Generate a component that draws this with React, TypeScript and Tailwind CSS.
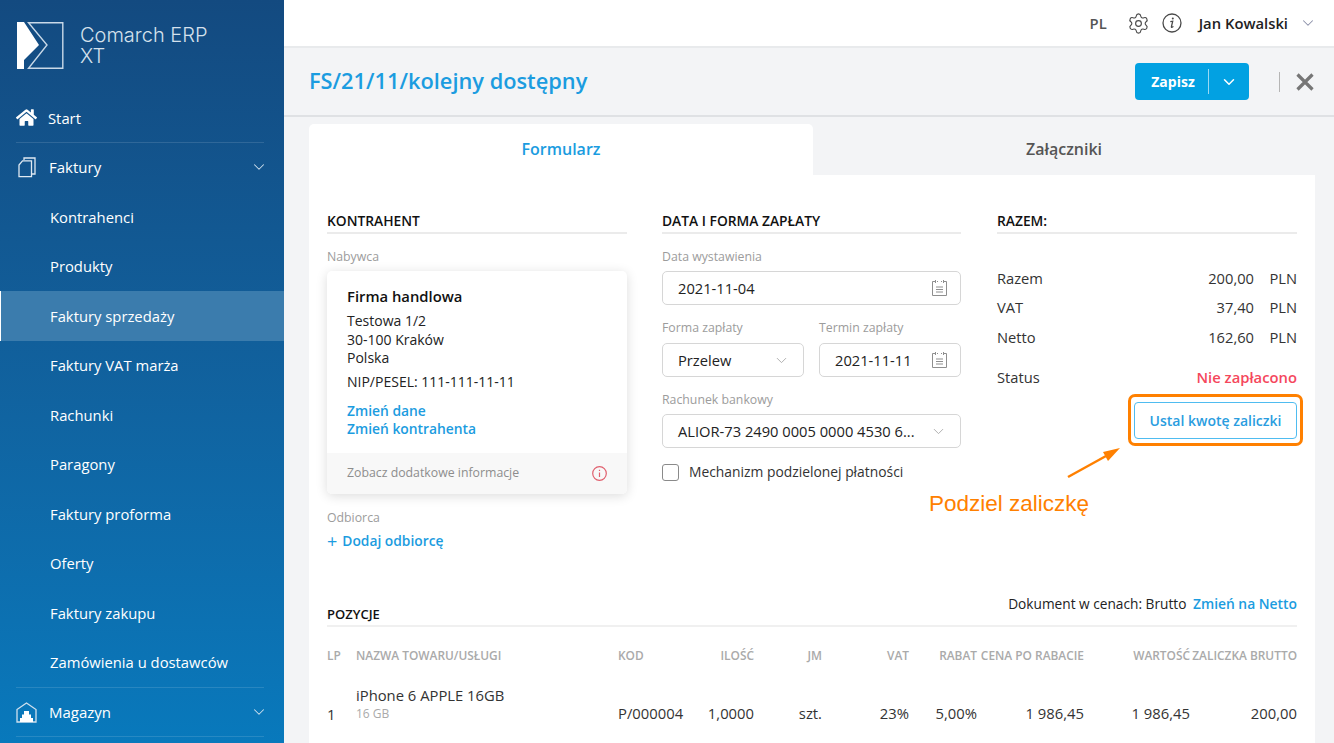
import React from "react";
import { ChevronDown, Settings } from "lucide-react";
import { FaHome } from "react-icons/fa";

const subItems = [
  "Kontrahenci",
  "Produkty",
  "Faktury sprzedaży",
  "Faktury VAT marża",
  "Rachunki",
  "Paragony",
  "Faktury proforma",
  "Oferty",
  "Faktury zakupu",
  "Zamówienia u dostawców",
];

function Logo() {
  return (
    <svg width="47" height="47" viewBox="0 0 47 47" className="shrink-0">
      <path d="M0 0H7L22 23L7 38V47H0Z" fill="#ffffff" />
      <path d="M11.5 .7H45.8V46.3H11.5L30 23Z" fill="none" stroke="#c9d9e8" strokeWidth="1.4" />
    </svg>
  );
}

function DocsIcon() {
  return (
    <svg width="18" height="21" viewBox="0 0 18 21" fill="none" stroke="#dfe9f2" strokeWidth="1.3">
      <path d="M6 3V1H17V17H14" />
      <path d="M4.5 3.8H13.5V19.6H1V8Z" />
    </svg>
  );
}

function WarehouseIcon() {
  return (
    <svg width="21" height="21" viewBox="0 0 21 21">
      <path d="M1 7.5L10.5 1L20 7.5V20H1Z" fill="none" stroke="#cfe0ee" strokeWidth="1.3" />
      <path d="M8 9H13V12.5H15V16H17V20H4V16H6V12.5H8Z" fill="#ffffff" />
    </svg>
  );
}

function CalendarIcon() {
  return (
    <svg width="15" height="16" viewBox="0 0 15 16" fill="none" stroke="#8f8f8f" strokeWidth="1">
      <path d="M3 1.5H.5V15.5H14.5V1.5H12" />
      <path d="M5 1.5H6M9 1.5H10M3.5 0V3M11.5 0V3M4 7H11M4 9.5H11M4 12H11" />
    </svg>
  );
}

function InfoIcon() {
  return (
    <svg width="20" height="20" viewBox="0 0 20 20" fill="none" stroke="#4a4a4a">
      <circle cx="10" cy="10" r="9" strokeWidth="1.3" />
      <path d="M8.3 8.6L10.7 8.2L9.4 13.8C9.3 14.5 10.2 14.6 11.4 13.4" strokeWidth="1.3" />
      <circle cx="10.8" cy="5.6" r="1" fill="#4a4a4a" stroke="none" />
    </svg>
  );
}

function Sidebar() {
  return (
    <aside className="w-[284px] shrink-0 bg-gradient-to-b from-[#134a80] to-[#0879bc] text-white">
      <div className="h-[93px] pl-[17px] pt-[22px] flex gap-[16px]">
        <Logo />
        <div className="text-[20px] leading-[21px] font-light text-[#d5e1ec] pt-[3px] font-['Inter','sans-serif']">
          Comarch ERP
          <br />
          XT
        </div>
      </div>
      <div className="ml-[16px] mr-[20px] h-[49.5px] flex items-center gap-[11px] border-b border-[#ffffff20]">
        <FaHome className="w-[21px] h-[21px] text-white" />
        <span className="text-[14.8px] pt-[1px]">Start</span>
      </div>
      <div className="ml-[16px] mr-[20px] h-[49.5px] flex items-center">
        <div className="w-[33px] pl-[2px]">
          <DocsIcon />
        </div>
        <span className="text-[15px] flex-1">Faktury</span>
        <ChevronDown className="w-[18px] h-[18px] -mr-[4px] text-[#cfe0ee]" strokeWidth={1.4} />
      </div>
      {subItems.map((s) => (
        <div
          key={s}
          className={
            s === "Faktury sprzedaży"
              ? "h-[49.5px] flex items-center pl-[49px] text-[14.8px] bg-[#3b7cad] border-l-[1px] border-white"
              : "h-[49.5px] flex items-center pl-[50px] text-[14.8px]"
          }
        >
          {s}
        </div>
      ))}
      <div className="ml-[16px] mr-[20px] h-[50px] flex items-center border-y border-[#ffffff20]">
        <div className="w-[33px]">
          <WarehouseIcon />
        </div>
        <span className="text-[15px] flex-1">Magazyn</span>
        <ChevronDown className="w-[18px] h-[18px] -mr-[4px] text-[#cfe0ee]" strokeWidth={1.4} />
      </div>
    </aside>
  );
}

function Header() {
  return (
    <header className="h-[48px] shrink-0 bg-white border-b-2 border-[#e8eaec] flex items-center justify-end pr-[17px] text-[14.8px] text-[#222]">
      <span className="font-semibold text-[#555] mr-[20px]">PL</span>
      <Settings className="w-[23px] h-[23px] text-[#4a4a4a] mr-[12px]" strokeWidth={1.2} />
      <InfoIcon />
      <span className="font-semibold ml-[17px] mr-[11px]">Jan Kowalski</span>
      <ChevronDown className="w-[18px] h-[18px] text-[#8a8fa8]" strokeWidth={1.4} />
    </header>
  );
}

function TitleBar() {
  return (
    <div className="h-[69px] shrink-0 border-b-2 border-[#dfe1e4] flex items-center pl-[25px] pr-[20px]">
      <h1 className="text-[21.8px] font-semibold text-[#1b9ce0] flex-1">FS/21/11/kolejny dostępny</h1>
      <div className="h-[37px] w-[114px] rounded-[4px] bg-[#02a1e2] text-white flex items-center text-[14px] font-bold">
        <span className="w-[73px] text-center pl-[3px]">Zapisz</span>
        <span className="w-px h-[25px] bg-[#9ad9f4]" />
        <span className="flex-1 flex justify-center">
          <ChevronDown className="w-[18px] h-[18px]" strokeWidth={2} />
        </span>
      </div>
      <span className="w-px h-[20px] bg-[#b5b5b5] ml-[30px] mr-[16px]" />
      <svg width="18" height="18" viewBox="0 0 18 18" stroke="#767676" strokeWidth="3.2" fill="none">
        <path d="M1.5 1.5L16.5 16.5M16.5 1.5L1.5 16.5" />
      </svg>
    </div>
  );
}

function SectionTitle({ children }: { children: React.ReactNode }) {
  return (
    <div className="h-[18px] border-b-2 border-[#ebebeb] box-content pb-[2px] text-[13.8px] leading-[18px] font-semibold text-[#111]">
      {children}
    </div>
  );
}

function Label({ children, className = "" }: { children: React.ReactNode; className?: string }) {
  return <div className={"text-[12.3px] leading-[16px] text-[#9c9c9c] " + className}>{children}</div>;
}

function Field({ children, right }: { children: React.ReactNode; right: React.ReactNode }) {
  return (
    <div className="h-[34px] border border-[#d6d6d6] rounded-[5px] flex items-center justify-between pl-[15px] pr-[13px] text-[14.7px] text-[#222] whitespace-nowrap">
      <span>{children}</span>
      {right}
    </div>
  );
}

const Chev = () => <ChevronDown className="w-[17px] h-[17px] text-[#b0b0b0] shrink-0" strokeWidth={1.4} />;

function Contractor() {
  return (
    <div>
      <SectionTitle>KONTRAHENT</SectionTitle>
      <Label className="mt-[15px]">Nabywca</Label>
      <div className="mt-[6px] h-[223px] rounded-[5px] bg-white shadow-[0_2px_12px_rgba(0,0,0,0.14)] flex flex-col text-[14px] text-[#222] overflow-hidden">
        <div className="flex-1 pl-[20px] pt-[15px]">
          <div className="text-[14.8px] leading-[20px] font-semibold text-[#111]">Firma handlowa</div>
          <div className="mt-[6px] leading-[18.5px]">
            Testowa 1/2
            <br />
            30-100 Kraków
            <br />
            Polska
          </div>
          <div className="mt-[5px] leading-[18.5px]">NIP/PESEL: 111-111-11-11</div>
          <div className="mt-[11px] text-[13.85px] leading-[18px] font-semibold text-[#1b9ce0]">
            Zmień dane
            <br />
            Zmień kontrahenta
          </div>
        </div>
        <div className="h-[41px] bg-[#f8f8f8] flex items-center justify-between pl-[20px] pr-[20px] text-[12.3px] text-[#8d8d8d]">
          <span>Zobacz dodatkowe informacje</span>
          <svg width="15" height="15" viewBox="0 0 15 15" fill="none" stroke="#e0606e" strokeWidth="1.2">
            <circle cx="7.5" cy="7.5" r="6.8" />
            <path d="M7.5 6.5V11M7.5 3.7V5" />
          </svg>
        </div>
      </div>
      <Label className="mt-[16px]">Odbiorca</Label>
      <div className="mt-[5px] text-[13.8px] leading-[20px] font-semibold text-[#1b9ce0] flex items-center gap-[5px]">
        <span className="text-[18px] font-normal leading-[20px]">+</span>
        Dodaj odbiorcę
      </div>
    </div>
  );
}

function Payment() {
  return (
    <div className="pr-[1px]">
      <SectionTitle>DATA I FORMA ZAPŁATY</SectionTitle>
      <Label className="mt-[15px]">Data wystawienia</Label>
      <div className="mt-[6px]">
        <Field right={<CalendarIcon />}>2021-11-04</Field>
      </div>
      <div className="mt-[15px] grid grid-cols-2 gap-[15px]">
        <div>
          <Label>Forma zapłaty</Label>
          <div className="mt-[7px]">
            <Field right={<Chev />}>Przelew</Field>
          </div>
        </div>
        <div>
          <Label>Termin zapłaty</Label>
          <div className="mt-[7px]">
            <Field right={<CalendarIcon />}>2021-11-11</Field>
          </div>
        </div>
      </div>
      <Label className="mt-[15px]">Rachunek bankowy</Label>
      <div className="mt-[6px]">
        <Field right={<Chev />}>ALIOR-73 2490 0005 0000 4530 6...</Field>
      </div>
      <div className="mt-[14px] flex items-center gap-[10px] text-[13.85px] text-[#333]">
        <span className="w-[17px] h-[17px] border border-[#8a8a8a] rounded-[3px]" />
        Mechanizm podzielonej płatności
      </div>
    </div>
  );
}

function Totals() {
  const rows = [
    ["Razem", "200,00"],
    ["VAT", "37,40"],
    ["Netto", "162,60"],
  ];
  return (
    <div className="relative">
      <SectionTitle>RAZEM:</SectionTitle>
      <div className="mt-[29px] text-[14.7px] text-[#333]">
        {rows.map(([k, v]) => (
          <div key={k} className="h-[29.5px] flex items-center">
            <span className="flex-1">{k}</span>
            <span>{v}</span>
            <span className="w-[43px] text-right">PLN</span>
          </div>
        ))}
      </div>
      <div className="mt-[16px] h-[20px] flex items-center justify-between text-[14.7px] text-[#333]">
        <span>Status</span>
        <span className="font-semibold text-[14.8px] text-[#f5475c]">Nie zapłacono</span>
      </div>
      <div className="mt-[14px] flex justify-end">
        <div className="h-[37px] w-[163px] border border-[#4fbcf0] rounded-[4px] flex items-center justify-center text-[14px] font-semibold text-[#2a9de0]">
          Ustal kwotę zaliczki
        </div>
      </div>
    </div>
  );
}

const gridCols = "grid grid-cols-[29px_262px_76px_60px_68px_87px_68px_107px_106px_107px] whitespace-nowrap";

function Positions() {
  return (
    <div className="mt-[42px]">
      <div className="flex items-end justify-between border-b-2 border-[#f0f0f0] h-[34px] pb-[2px]">
        <span className="text-[13px] leading-[18px] font-semibold text-[#111]">POZYCJE</span>
        <span className="text-[13.7px] leading-[20px] pt-[1px] text-[#222] self-start">
          Dokument w cenach: Brutto <span className="ml-[3px] font-semibold text-[13.85px] text-[#1b9ce0]">Zmień na Netto</span>
        </span>
      </div>
      <div className={gridCols + " mt-[19px] text-[11.9px] leading-[18px] font-semibold text-[#aaaaaa]"}>
        <div>LP</div>
        <div>NAZWA TOWARU/USŁUGI</div>
        <div>KOD</div>
        <div className="text-right">ILOŚĆ</div>
        <div className="text-right">JM</div>
        <div className="text-right">VAT</div>
        <div className="text-right">RABAT</div>
        <div className="text-right">CENA PO RABACIE</div>
        <div className="text-right">WARTOŚĆ</div>
        <div className="text-right">ZALICZKA BRUTTO</div>
      </div>
      <div className={gridCols + " mt-[21px] text-[14.8px] leading-[20px] text-[#333] items-end"}>
        <div>1</div>
        <div>
          <div>iPhone 6 APPLE 16GB</div>
          <div className="text-[12px] leading-[17px] pb-[2px] text-[#aaaaaa]">16 GB</div>
        </div>
        <div className="pb-[1px]">P/000004</div>
        <div className="text-right pb-[1px]">1,0000</div>
        <div className="text-right pb-[1px]">szt.</div>
        <div className="text-right pb-[1px]">23%</div>
        <div className="text-right pb-[1px]">5,00%</div>
        <div className="text-right pb-[1px]">1 986,45</div>
        <div className="text-right pb-[1px]">1 986,45</div>
        <div className="text-right pb-[1px]">200,00</div>
      </div>
    </div>
  );
}

function Annotation() {
  return (
    <>
      <div className="absolute left-[819px] top-[219px] w-[175px] h-[52px] border-[3px] border-[#ff8000] rounded-[7px]" />
      <svg className="absolute left-[755px] top-[269px]" width="60" height="40" viewBox="0 0 60 40">
        <path d="M4 33L42 12" stroke="#ff8000" strokeWidth="2.5" />
        <path d="M56 4L39 8L44 17Z" fill="#ff8000" />
      </svg>
      <div className="absolute left-[620px] top-[315px] text-[22.5px] leading-[28px] text-[#ff8000] font-['Liberation_Sans','sans-serif'] whitespace-nowrap">
        Podziel zaliczkę
      </div>
    </>
  );
}

export default function App() {
  return (
    <div className="flex h-[743px] w-[1334px] overflow-hidden font-['Open_Sans','sans-serif'] bg-[#f3f4f6]">
      <Sidebar />
      <main className="flex-1 flex flex-col min-w-0">
        <Header />
        <TitleBar />
        <div className="pl-[25px] pr-[19px] pt-[7px] flex-1 min-h-0">
          <div className="flex h-[51px] text-[16px] font-semibold">
            <div className="w-[504px] bg-white rounded-t-[5px] flex items-center justify-center pb-[1px] text-[#1b9ce0]">Formularz</div>
            <div className="flex-1 flex items-center justify-center pb-[1px] text-[#555]">Załączniki</div>
          </div>
          <div className="relative bg-white px-[18px] pt-[37px] pb-[40px]">
            <div className="grid grid-cols-[300px_300px_300px] gap-x-[35px]">
              <Contractor />
              <Payment />
              <Totals />
            </div>
            <Positions />
            <Annotation />
          </div>
        </div>
      </main>
    </div>
  );
}
